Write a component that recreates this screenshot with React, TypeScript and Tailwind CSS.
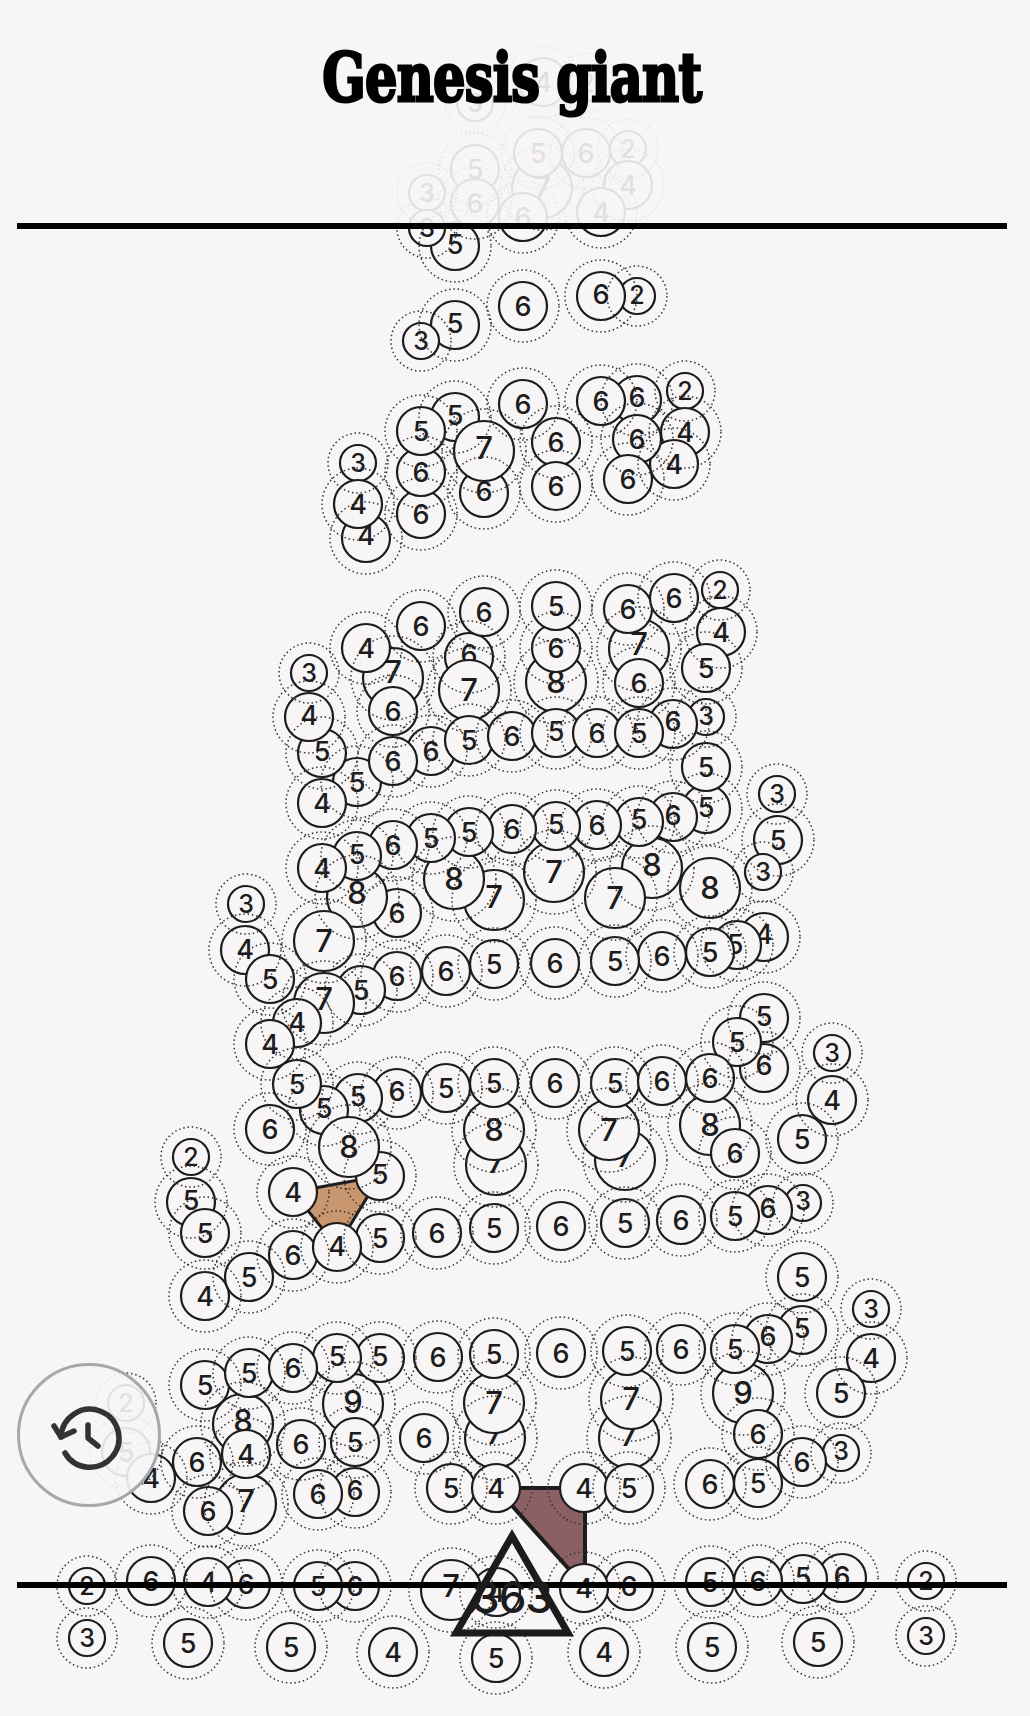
import React from 'react';

type Cell = [number, number, number, number?, number?];

// x, y, value, optional digit nudge. Order is paint order: later circles cover earlier ones.
const cells: Cell[] = [
  // faded part above the top line
  [543, 82, 4], [587, 83, 2], [475, 103, 3],
  [542, 188, 7], [538, 153, 5], [586, 153, 6], [628, 149, 2], [628, 185, 4], [601, 212, 4],
  [475, 169, 5], [475, 203, 6], [523, 217, 6], [427, 193, 3], [455, 246, 5, 0, -2], [427, 228, 3],
  // shoulders
  [455, 325, 5, 0, -2], [421, 341, 3], [523, 306, 6], [637, 296, 2, 0, -1], [601, 296, 6, 0, -2],
  [455, 417, 5, 0, -2], [484, 493, 6, 0, -2], [484, 451, 7, 0, -3], [421, 514, 6], [421, 472, 6], [421, 431, 5],
  [358, 463, 3], [366, 538, 4, 0, -3], [358, 504, 4], [523, 404, 6], [556, 442, 6], [556, 486, 6],
  [637, 400, 6, 0, -3], [601, 401, 6], [685, 391, 2], [685, 432, 4], [674, 464, 4], [637, 439, 6], [628, 479, 6],
  // upper arms
  [309, 673, 3], [393, 678, 7, 0, -6], [366, 648, 4], [421, 626, 6], [393, 711, 6], [469, 657, 6, 0, -3], [469, 690, 7],
  [484, 612, 6], [556, 682, 8], [556, 648, 6], [556, 606, 5], [639, 649, 7, 0, -5], [628, 609, 6], [639, 683, 6],
  [674, 598, 6], [720, 590, 2], [721, 632, 4], [706, 668, 5],
  [357, 782, 5], [322, 753, 5, 0, -2], [309, 717, 4, 0, -2], [322, 803, 4], [431, 751, 6], [393, 761, 6], [469, 740, 5], [512, 736, 6],
  [556, 733, 5, 0, -2], [597, 733, 6], [706, 717, 3, 0, -1], [673, 724, 6, 0, -3], [639, 733, 5],
  // chest
  [706, 809, 5, 0, -2], [706, 767, 5], [673, 817, 6, 0, -2], [397, 913, 6], [357, 897, 8, 0, -4], [494, 900, 7, 0, -3], [454, 879, 8],
  [554, 872, 7], [652, 868, 8, 0, -3], [615, 898, 7], [710, 888, 8],
  [639, 822, 5, 0, -3], [597, 825, 6], [556, 826, 5, 0, -2], [512, 829, 6], [469, 832, 5], [431, 838, 5], [393, 845, 6], [357, 856, 5, 0, -2], [322, 868, 4],
  [777, 794, 3], [778, 840, 5], [763, 872, 3], [246, 904, 3], [324, 941, 7],
  // waist
  [764, 937, 4, 0, -3], [737, 945, 5, -2, -1], [710, 952, 5], [662, 956, 6], [615, 961, 5], [555, 963, 6], [494, 964, 5], [446, 971, 6], [397, 976, 6],
  [361, 990, 5], [324, 1003, 7, 0, -4], [245, 950, 4, 0, -1], [270, 979, 5], [297, 1023, 4, 0, -1], [270, 1044, 4],
  [397, 1093, 6, 0, -2], [358, 1098, 5, 0, -2], [324, 1110, 5, 0, -2], [297, 1084, 5], [270, 1129, 6],
  [380, 1176, 5, 0, -2], [349, 1147, 8], [293, 1192, 4], [446, 1088, 5], [496, 1165, 7, 0, -3], [494, 1130, 8], [494, 1083, 5],
  [555, 1083, 6], [625, 1160, 7, 0, -4], [609, 1130, 7], [615, 1083, 5], [662, 1081, 6],
  [710, 1125, 8], [735, 1153, 6], [764, 1018, 5, 0, -2], [764, 1068, 6, 0, -3], [737, 1042, 5], [710, 1078, 6],
  [832, 1053, 3], [802, 1139, 5], [832, 1100, 4],
  // hips
  [803, 1203, 3, 0, -2], [768, 1210, 6, 0, -2], [735, 1216, 5], [681, 1220, 6], [625, 1223, 5], [561, 1226, 6], [494, 1228, 5], [437, 1233, 6],
  [191, 1157, 2], [191, 1202, 5, 0, -2], [205, 1233, 5], [205, 1296, 4], [249, 1277, 5], [293, 1255, 6], [380, 1238, 5], [337, 1247, 4, 0, -1],
  [802, 1277, 5], [802, 1330, 5, 0, -2], [768, 1339, 6, 0, -3], [871, 1309, 3], [871, 1358, 4], [841, 1393, 5],
  // legs
  [205, 1385, 5], [243, 1424, 8, 0, -3], [249, 1373, 5], [353, 1404, 9, 0, -2], [380, 1358, 5, 0, -2], [337, 1358, 5, 0, -2], [293, 1368, 6],
  [126, 1403, 2], [126, 1452, 5], [151, 1478, 4], [197, 1462, 6], [301, 1444, 6], [355, 1442, 5], [246, 1504, 7, 0, -3], [246, 1454, 4], [208, 1511, 6],
  [355, 1492, 6, 0, -2], [318, 1494, 6], [438, 1357, 6], [424, 1438, 6], [495, 1438, 7, 0, -5], [494, 1403, 7], [494, 1354, 5],
  [451, 1488, 5], [496, 1488, 4], [629, 1438, 7, 0, -3], [631, 1399, 7], [627, 1351, 5], [561, 1353, 6], [681, 1349, 6],
  [584, 1488, 4], [629, 1488, 5], [743, 1393, 9], [735, 1349, 5], [758, 1434, 6], [710, 1484, 6], [841, 1453, 3, 0, -2], [802, 1462, 6], [758, 1483, 5],
  // feet
  [87, 1586, 2], [151, 1581, 6], [246, 1584, 6], [208, 1582, 4], [355, 1586, 6], [318, 1586, 5], [496, 1592, 4], [451, 1590, 7, 0, -4],
  [629, 1586, 6], [584, 1588, 4], [842, 1578, 6, 0, -2], [803, 1579, 5, 0, -2], [758, 1581, 6], [710, 1582, 5], [926, 1581, 2],
  [87, 1638, 3], [188, 1643, 5], [291, 1647, 5], [393, 1652, 4], [496, 1658, 5], [604, 1652, 4], [712, 1647, 5], [818, 1642, 5], [926, 1636, 3],
];

const radius = (v: number) => (v < 4 ? 18 : v < 7 ? 24 : 30);
const digitSize = (v: number) => (v < 4 ? 25 : v < 7 ? 27 : 31);

const App: React.FC = () => {
  return (
    <div className="relative h-[1716px] w-[1030px] overflow-hidden bg-[#f7f5f6] font-['Inter',sans-serif]">
      {/* the board */}
      <svg className="absolute inset-0" width={1030} height={1716} viewBox="0 0 1030 1716">
        <polygon points="293,1192 380,1176 337,1247" fill="#c8966f" stroke="#1c1c1c" strokeWidth={3} />
        <polygon points="496,1488 585,1488 585,1587" fill="#8a6064" stroke="#1c1c1c" strokeWidth={4} />
        {cells.map(([x, y, v, dx = 0, dy = 0], i) => (
          <g key={i}>
            <circle cx={x} cy={y} r={radius(v)} fill="#f7f5f6" stroke="#1c1c1c" strokeWidth={2.2} />
            <text x={x + dx} y={y + dy + digitSize(v) * 0.36} textAnchor="middle" fontSize={digitSize(v)} fontWeight={500} fill="#1c1c1c">
              {v}
            </text>
          </g>
        ))}
        {cells.map(([x, y, v], i) => (
          <circle key={i} cx={x} cy={y} r={radius(v) + 12} fill="none" stroke="#333" strokeWidth={1.5} strokeDasharray="1.5 2.8" />
        ))}
      </svg>

      <div className="relative flex h-full flex-col">
        <header className="flex h-[223px] justify-center bg-[#f7f5f6]/90 pt-[35px]">
          <h1 className="h-fit origin-center -translate-x-[3px] scale-x-[.75] whitespace-nowrap font-['DejaVu_Serif',serif] text-[68px] leading-[84px] font-bold tracking-[-1px] text-black [-webkit-text-stroke:3px_black]">
            Genesis giant
          </h1>
        </header>
        <div className="ml-[17px] h-[6px] w-[990px] bg-black" />
        <div className="mt-[1353px] ml-[17px] h-[6px] w-[990px] bg-black" />
      </div>

      {/* remaining score */}
      <svg className="absolute inset-0" width={1030} height={1716} viewBox="0 0 1030 1716">
        <polygon points="512,1536 456,1633 568,1633" fill="none" stroke="#1c1c1c" strokeWidth={7} />
        <text x={512} y={1613} textAnchor="middle" fontSize={44} fontWeight={500} letterSpacing={-1} fill="#1c1c1c">
          363
        </text>
      </svg>

      <button className="absolute top-[1363px] left-[17px] flex size-[144px] items-center justify-center rounded-full border-[3px] border-[#a8a8a8] bg-[#f7f5f6]/90">
        <svg width={144} height={144} viewBox="0 0 144 144" fill="none" stroke="#333" strokeWidth={5.5} strokeLinecap="round" strokeLinejoin="round" className="shrink-0">
          <path d="M44 74A29 29 0 1 1 48 90" />
          <path d="M37 63L44 74L57 68" />
          <path d="M71 62V75L81 83" />
        </svg>
      </button>
    </div>
  );
};

export default App;
